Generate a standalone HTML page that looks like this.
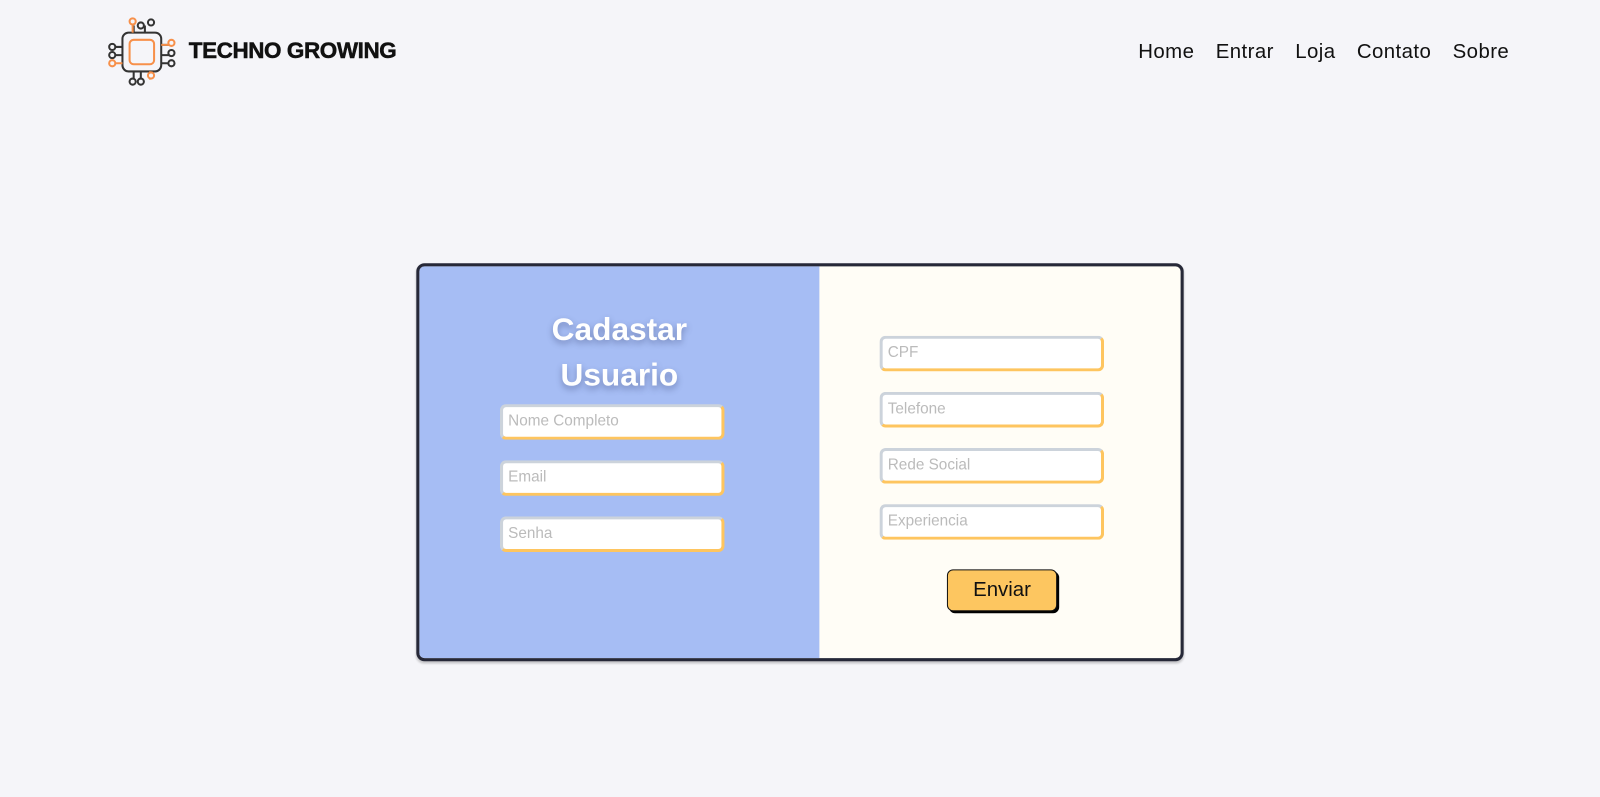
<!DOCTYPE html>
<html><head><meta charset="utf-8"><style>
*{box-sizing:border-box;margin:0;padding:0}
body{width:1600px;height:797px;background:#f5f5f9;font-family:"Liberation Sans",sans-serif;position:relative;overflow:hidden}
#w{position:absolute;left:0;top:0;width:1568px;height:781px;transform:scale(1.0204);transform-origin:0 0}
.brand{position:absolute;left:185px;top:37px;font-weight:bold;font-size:22px;letter-spacing:-0.4px;color:#111;-webkit-text-stroke:0.5px #111}
nav{position:absolute;top:40px;right:89px;font-size:20px;letter-spacing:0.4px;color:#111}
nav span{margin-left:21px}
.card{position:absolute;left:408px;top:258px;width:752px;height:390px;border:3px solid #262838;border-radius:8px;overflow:hidden;background:#fffdf6;box-shadow:0 2px 2px rgba(0,0,0,.2)}
.left{position:absolute;left:0;top:0;width:392px;height:100%;background:#a6bdf4}
h1{position:absolute;left:0;width:392px;top:39px;text-align:center;color:#fff;font-size:31px;line-height:45px;font-weight:bold;text-shadow:0 3px 6px rgba(60,70,120,.45)}
.in{position:absolute;width:220px;height:35px;background:#fff;border:3px solid;border-color:#ccd3db #fec55f #fec55f #ccd3db;border-radius:6px;font-size:15px;color:#bbb;padding:5px 5px}
.btn{position:absolute;left:517px;top:297px;width:108px;height:41px;background:#fdc660;border:1px solid #111;border-radius:6px;box-shadow:2px 2px 0 #000;font-size:20px;text-align:center;line-height:38px;color:#111}
</style></head><body><div id="w">
<svg style="position:absolute;left:104px;top:16px" width="70" height="70" viewBox="0 0 70 70" fill="none" stroke-width="2">
<rect x="16" y="16" width="38" height="38" rx="6" stroke="#333"/>
<rect x="23" y="23" width="24" height="24" rx="4" stroke="#f7904a"/>
<g stroke="#333"><path d="M27 16V9M38 16V9M16 30H8M16 38H8M54 28H62M54 38H62M54 46H62M27 54V62M34 54V62"/></g>
<g stroke="#f7904a"><path d="M26 16V6M16 46H8M54 28H62M43 54V62"/></g>
<g fill="#f5f5f9"><circle cx="26" cy="5" r="3" stroke="#f7904a"/><circle cx="34" cy="9" r="3" stroke="#333"/><circle cx="44" cy="6" r="3" stroke="#333"/>
<circle cx="6" cy="30" r="3" stroke="#333"/><circle cx="6" cy="38" r="3" stroke="#333"/><circle cx="6" cy="46" r="3" stroke="#f7904a"/>
<circle cx="64" cy="26" r="3" stroke="#f7904a"/><circle cx="64" cy="36" r="3" stroke="#333"/><circle cx="64" cy="46" r="3" stroke="#333"/>
<circle cx="26" cy="64" r="3" stroke="#333"/><circle cx="34" cy="64" r="3" stroke="#333"/><circle cx="44" cy="58" r="3" stroke="#f7904a"/></g>
</svg>
<div class="brand">TECHNO GROWING</div>
<nav><span>Home</span><span>Entrar</span><span>Loja</span><span>Contato</span><span>Sobre</span></nav>
<div class="card">
<div class="left"><h1>Cadastar<br>Usuario</h1>
<div class="in" style="left:79px;top:135px">Nome Completo</div>
<div class="in" style="left:79px;top:190px">Email</div>
<div class="in" style="left:79px;top:245px">Senha</div>
</div>
<div class="in" style="left:451px;top:68px">CPF</div>
<div class="in" style="left:451px;top:123px">Telefone</div>
<div class="in" style="left:451px;top:178px">Rede Social</div>
<div class="in" style="left:451px;top:233px">Experiencia</div>
<div class="btn">Enviar</div>
</div>
</div></body></html>
